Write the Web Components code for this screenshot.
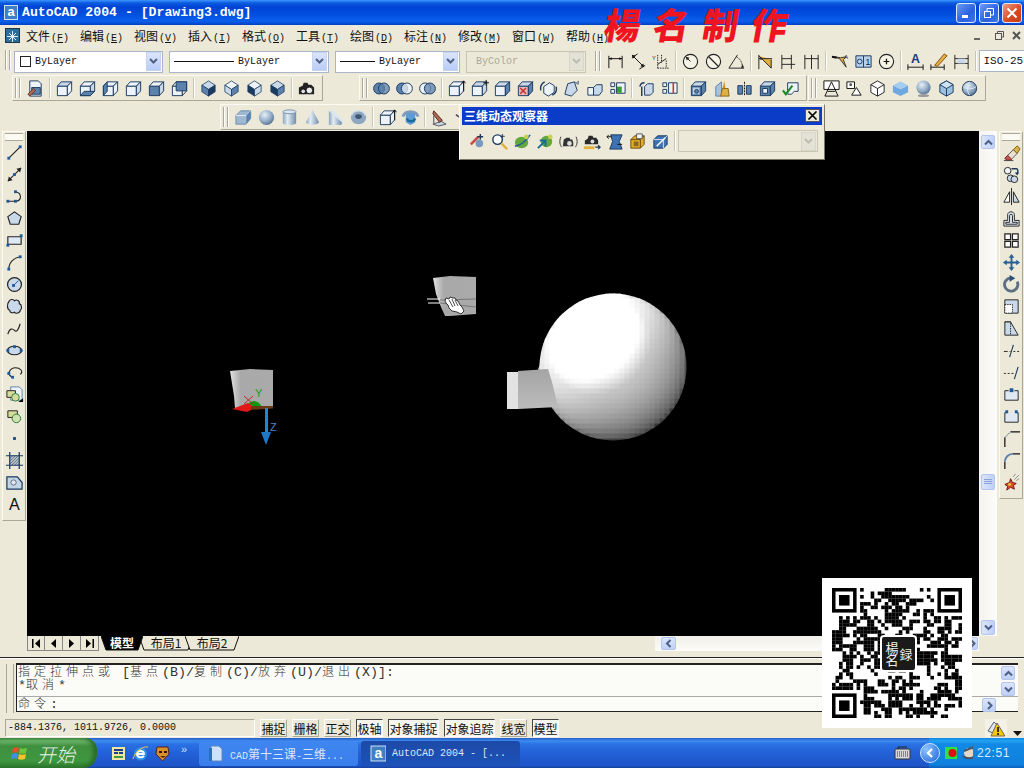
<!DOCTYPE html>
<html lang="zh">
<head>
<meta charset="utf-8">
<title>AutoCAD 2004</title>
<style>
  html, body { margin: 0; padding: 0; overflow: hidden; background: #ece9d8; }
</style>
</head>
<body>
<cad-app>
  <cad-title-bar>AutoCAD 2004 - [Drawing3.dwg]</cad-title-bar>
  <cad-menu-bar></cad-menu-bar>
  <tool-row h="27">
    <combo-bar></combo-bar>
    <tool-bar style="margin:1px 0 0 7px;border:0;padding-right:0" icons="dimlin dimali dimord | dimrad dimdia dimang | dimbase dimcont dimq | leader tol center | dima dimpen dimupd | "></tool-bar>
    <cad-combo text="ISO-25" style="margin-top:3px;width:46px"></cad-combo>
  </tool-row>
  <tool-row h="28" pad="1">
    <tool-bar style="margin-left:12px" icons="props | vtop vbot vleft vright vfront vback | iso1 iso2 iso3 iso4 | camera"></tool-bar>
    <tool-bar style="margin-left:36px" icons="union subtract intersect | extrude3 move3 box3 delface rotface taperf copyf colorf | clean sepred | shell sweep sep3 shell2 check"></tool-bar>
    <tool-bar style="margin-left:1px" icons="wire hidden3 flat3 gouraud sphere3 flat2 sphere4"></tool-bar>
  </tool-row>
  <tool-row h="29" pad="2">
    <tool-bar style="margin-left:220px" icons="sbox ssphere scyl scone swedge storus | extrude3 revolve | slice section"></tool-bar>
  </tool-row>
  <cad-workspace>
    <tool-bar slot="left" vertical icons="line xline pline polygon rect arc circle cloud spline ellipse earc insert block point hatch region mtext"></tool-bar>
    <cad-scene slot="scene"></cad-scene>
    <layout-tabs slot="tabs"></layout-tabs>
    <tool-bar slot="right" vertical icons="erase copy mirror offset array move rotate scale stretch trim extend break1 break2 chamfer fillet explode"></tool-bar>
  </cad-workspace>
  <cad-command>
    <mono-text slot="l1">指定拉伸点或 [基点(B)/复制(C)/放弃(U)/退出(X)]:</mono-text>
    <mono-text slot="l2">*取消*</mono-text>
    <mono-text slot="l3">命令:</mono-text>
  </cad-command>
  <cad-status></cad-status>
  <win-taskbar></win-taskbar>
</cad-app>
<red-stamp>楊名制作</red-stamp>
<orbit-panel></orbit-panel>
<qr-card></qr-card>

<script>
  // colours used by the toolbar icons
  const D = "#1b3a60", M = "#5b82ad", L = "#c9d9ea", P = "#eef3f8", Y = "#e0b040", G = "#3a9a3a", R = "#c8322d";

  const dot = (x, y) => `<rect x="${x - 1.5}" y="${y - 1.5}" width="3" height="3" fill="#1d5a9c"/>`;
  const box3 = (f, t, s) =>
    `<g stroke="${D}" stroke-linejoin="round"><path d="M2.5 7.5h10.500v10h-10.500z" fill="${f}"/><path d="M2.500 7.500l4-4.500h11l-4.500 4.500z" fill="${t}"/><path d="M13 7.500l4.500-4.500v9.500l-4.500 5z" fill="${s}"/></g>`;
  const iso = (t, l, r) =>
    `<g stroke="${D}" stroke-width=".8"><path d="M10 2l7 4.500-7 4.500-7-4.500z" fill="${t}"/><path d="M3 6.500l7 4.500v7l-7-4.500z" fill="${l}"/><path d="M17 6.500l-7 4.500v7l7-4.500z" fill="${r}"/></g>`;
  const rings = (a, b) =>
    `<circle cx="7.500" cy="10" r="5.800" fill="${a}" stroke="${D}"/><circle cx="12.500" cy="10" r="5.800" fill="${b}" fill-opacity=".75" stroke="${D}"/>`;
  const dimH = `<path d="M3 4v13M17 4v13M3 7h14" stroke="#111" fill="none"/><path d="M3 7l3-1.500v3zM17 7l-3-1.500v3z" fill="#111"/>`;

  const ICONS = {
    props: `<path d="M4 2h9l3 3v13H4z" fill="${P}" stroke="${D}"/><path d="M6 9h9v7H6z" fill="${M}" stroke="${D}"/><path d="M2 16l6-6 2 2-6 6z" fill="#b06a50" stroke="#633"/>`,
    vtop: box3(P, L, P), vbot: box3(P, P, L) + `<path d="M2.500 17.500l4-4.500h11l-4.500 4.500z" fill="${M}" stroke="${D}"/>`,
    vleft: box3(P, P, P) + `<path d="M2.500 7.500l4-4.500v10l-4 4.500z" fill="${M}" stroke="${D}"/>`,
    vright: box3(P, P, L), vfront: box3(M, P, L), vback: box3(P, P, P) + `<path d="M6.500 3h11v9.500h-11z" fill="${M}" stroke="${D}"/>`,
    iso1: iso(L, M, D), iso2: iso(P, L, M), iso3: iso(P, D, L), iso4: iso(L, D, M),
    camera: `<path d="M2 9l4-2 1-3h4l1 2h3l3 3v7H2z" fill="#222"/><circle cx="13" cy="12" r="3.500" fill="#eee" stroke="#111"/><circle cx="6.500" cy="13" r="2.500" fill="#ddd" stroke="#111"/>`,
    union: rings(M, M), subtract: rings(M, P), intersect: rings(P, M),
    extrude3: box3(P, P, P) + `<path d="M17.500 13V2M15.500 4.500l2-2.500 2 2.500" fill="none" stroke="#111"/>`,
    move3: box3(P, L, L) + `<path d="M14 4h6M17 1v6" stroke="#111"/>`,
    box3: box3(P, L, M),
    delface: box3("#e8b8b8", L, M) + `<path d="M4.500 9.500l6 6M10.500 9.500l-6 6" stroke="${R}" stroke-width="1.600"/>`,
    rotface: `<path d="M5 8l6-4 5 3v7l-6 4-5-3z" fill="${P}" stroke="${D}"/><path d="M2 12a8 8 0 0 1 4-9M18 8a8 8 0 0 1-4 9" fill="none" stroke="${D}" stroke-width="1.500"/>`,
    taperf: `<path d="M3 16l3-11 7-2 3 9-6 6z" fill="${L}" stroke="${D}"/><path d="M14 3l3 3M17 2v3" stroke="${D}"/>`,
    copyf: `<path d="M3 9h6v8H3z" fill="${P}" stroke="${D}"/><path d="M9 9l3-3h6v7l-3 4H9z" fill="${L}" stroke="${D}"/>`,
    colorf: `<path d="M3 4h4v4H3zM3 11h4v4H3z" fill="${P}" stroke="${D}"/><path d="M9 4h9v11H9z" fill="${P}" stroke="${D}"/><path d="M9.500 8h5v6.500h-5z" fill="${G}"/>`,
    clean: `<path d="M3 8a5 5 0 0 1 5-4M5 18V8" fill="none" stroke="${D}" stroke-width="1.500"/><path d="M8 8l3-3h6v9l-3 3H8z" fill="${L}" stroke="${D}"/>`,
    sepred: `<path d="M3 4h4v4H3zM3 11h4v4H3z" fill="${P}" stroke="${D}"/><path d="M9 4h9v11H9z" fill="${P}" stroke="${D}"/><path d="M14 4v11" stroke="${R}" stroke-width="1.600"/>`,
    shell: box3(M, L, M) + `<path d="M4 9h7v7H4z" fill="#b9cde2"/><circle cx="8" cy="13" r="2" fill="${M}" stroke="${D}"/>`,
    sweep: `<path d="M4 18V8l6-5v15z" fill="#a9c2dc" stroke="${M}"/><path d="M13 2l1 8h-3z" fill="#c9902a"/><path d="M9 18l2-8h6l1 8z" fill="${Y}" stroke="#8a6414"/>`,
    sep3: `<path d="M3 7h5v9H3zM12 7h5v9h-5z" fill="${M}" stroke="${D}"/><path d="M10 3v14" stroke="#111" stroke-dasharray="2 1"/>`,
    shell2: box3(M, L, M) + `<path d="M5 10h5v5H5z" fill="${P}" stroke="${D}"/>`,
    check: `<path d="M7 4h11v9h-4l-3 3H7z" fill="${P}" stroke="${D}"/><path d="M2 12l3 4 7-9" fill="none" stroke="#1c8a2c" stroke-width="2.200"/>`,
    wire: `<path d="M2 2h16v9H2z" fill="#fff" stroke="#111"/><path d="M10 3L3 18h14z" fill="none" stroke="#111"/><path d="M6 13h8" stroke="#111"/>`,
    hidden3: `<path d="M2 3h8v7H2z" fill="#fff" stroke="#111"/><path d="M12 9l5 8H7z" fill="#fff" stroke="#111"/><circle cx="6" cy="6" r="1.500" fill="#555"/>`,
    flat3: `<path d="M10 2l7 4v8l-7 4-7-4V6z" fill="#fff" stroke="#222"/><path d="M3 6l7 4 7-4M10 10v8" stroke="#222" fill="none"/>`,
    gouraud: `<path d="M10 3l8 4v7l-8 4-8-4V7z" fill="#6fa8de"/><path d="M2 7l8 4 8-4-8-4z" fill="#a5cdf0"/>`,
    sphere3: `<circle cx="10" cy="9" r="7.500" fill="url(#s)"/><ellipse cx="10" cy="17.500" rx="6" ry="1.500" fill="#999"/>`,
    flat2: `<path d="M10 2l7 4v8l-7 4-7-4V6z" fill="#9cc0e0" stroke="${D}"/><path d="M3 6l7 4 7-4-7-4z" fill="#cfe2f3" stroke="${D}"/><path d="M10 10v8" stroke="${D}"/>`,
    sphere4: `<circle cx="10" cy="10" r="7.500" fill="url(#s)" stroke="${D}"/><path d="M3 8c4 3 10 3 14 0M10 3c-3 4-3 9 0 14" stroke="#dfe9f2" fill="none"/>`,
    sbox: `<path d="M2 8l5-5h10.500v8l-5 6H2z" fill="#9fb8d2" stroke="#6d8cab"/><path d="M2 8h11l4.500-5" fill="none" stroke="#e9f0f7"/><path d="M13 8v9l4.500-6V3z" fill="${M}"/>`,
    ssphere: `<circle cx="10" cy="10" r="8" fill="url(#s)"/>`,
    scyl: `<path d="M3 4v12c1 2.500 13 2.500 14 0V4z" fill="url(#c)"/><ellipse cx="10" cy="4" rx="7" ry="2" fill="#dbe6f0" stroke="#7a95b0"/>`,
    scone: `<path d="M10 2L3 15c1 3.500 13 3.500 14 0z" fill="url(#c)"/>`,
    swedge: `<path d="M3 3l14 12-1 3H3z" fill="url(#c)"/><path d="M3 3l4-1 12 12-2 1z" fill="#dbe6f0"/>`,
    storus: `<ellipse cx="10" cy="10" rx="8" ry="7" fill="#8ea6bf"/><ellipse cx="10" cy="9" rx="3.500" ry="2.500" fill="#3e5673"/><path d="M3 8a7 5 0 0 1 14 0" fill="none" stroke="#d5e0eb" stroke-width="1.500"/>`,
    revolve: `<path d="M5 6l5-3 5 3v9l-5 3-5-3z" fill="#5b9bd8"/><path d="M2 9c2-7 14-7 16 0" fill="none" stroke="#7e9ab8" stroke-width="3"/><path d="M6 11c2 4 7 4 9 0" fill="none" stroke="#1a6c9a" stroke-width="2.500"/>`,
    slice: `<path d="M3 17l9-3 5 3-8 2z" fill="#c9d2db" stroke="#556"/><path d="M4 3l9 10-3 2L3 6z" fill="#b06a50" stroke="#522"/><path d="M4 8v8" stroke="#445"/>`,
    section: `<path d="M3 7l7 5 7-5" fill="none" stroke="#445" stroke-width="1.500"/>`,
    line: `<path d="M4 16L16 4" stroke="#222" stroke-width="1.200"/>` + dot(4, 16) + dot(16, 4),
    xline: `<path d="M3 17L17 3" stroke="#222" stroke-width="1.200"/><path d="M17 3l-1 5-4-4zM3 17l1-5 4 4z" fill="#222"/>` + dot(10, 10),
    pline: `<path d="M3 15h8c7 0 7-9 0-10" fill="none" stroke="#222" stroke-width="1.200"/>` + dot(3, 15) + dot(11, 15) + dot(11, 5),
    polygon: `<path d="M10 3l7 5-2.500 8h-9L3 8z" fill="${L}" stroke="#222" stroke-width="1.200"/>`,
    rect: `<path d="M3 6h14v8H3z" fill="#dfe9f3" stroke="#222" stroke-width="1.200"/>` + dot(3, 15) + dot(17, 5),
    arc: `<path d="M4 17C4 10 9 5 16 4" fill="none" stroke="#222" stroke-width="1.200"/>` + dot(4, 17) + dot(16, 4),
    circle: `<circle cx="10" cy="10" r="7.300" fill="${L}" stroke="#222" stroke-width="1.300"/><path d="M10 10l4-4" stroke="#1d5a9c"/>` + dot(9, 11),
    cloud: `<path d="M4 5c1-3 5-3 6-1 2-2 6 0 5 3 3 1 3 6 1 7 0 3-5 4-6 2-2 1-5 1-5-2C2 13 2 7 4 5z" fill="${L}" stroke="#222" stroke-width="1.200"/>`,
    spline: `<path d="M3 16c2-7 5-6 7-4s4 0 6-7" fill="none" stroke="#222" stroke-width="1.200"/>`,
    ellipse: `<ellipse cx="10" cy="10" rx="7.500" ry="4.500" fill="${L}" stroke="#222" stroke-width="1.200"/>` + dot(3, 10) + dot(17, 10) + dot(10, 6),
    earc: `<path d="M8 15C0 12 6 5 11 5s9 4 5 7" fill="none" stroke="#222" stroke-width="1.200"/>` + dot(4, 11) + dot(8, 15),
    insert: `<path d="M6 2h9l3 3v11H6z" fill="${P}" stroke="${M}"/><path d="M2 6h9v7H2z" fill="#d6dd9c" stroke="#222"/><circle cx="11" cy="13" r="4" fill="#d6dd9c" stroke="#2a7a3a"/><path d="M14 18l5-4v4z" fill="#000"/>`,
    block: `<path d="M3 4h10v7H3z" fill="#d6dd9c" stroke="#222"/><circle cx="12" cy="12" r="4.500" fill="#cfe3b0" stroke="#2a7a3a"/>`,
    point: `<rect x="8.500" y="8.500" width="3" height="3" fill="#1d4a7c"/>`,
    hatch: `<path d="M5 5h10v10H5z" fill="#b9c6d4"/><path d="M5 8l3-3M5 11l6-6M5 14l9-9M7 15l8-8M10 15l5-5M13 15l2-2" stroke="#445" stroke-width=".7"/><path d="M1 5h18M1 15h18M5 1v18M15 1v18" stroke="#1b3a60" stroke-width="1.300"/>`,
    region: `<path d="M2 4h11l5 6v7H2z" fill="#c3d6e8" stroke="#1b3a60" stroke-width="1.300"/><circle cx="9" cy="10" r="2.800" fill="#dfe9f3" stroke="#667"/>`,
    mtext: `<text x="10" y="16" text-anchor="middle" font-family="Liberation Sans,sans-serif" font-size="17" fill="#111">A</text>`,
    erase: `<path d="M3 16l9-9 4 4-7 7H5z" fill="#e9e2d2" stroke="#555"/><path d="M12 7l4-4 3 3-3 5z" fill="#d8b54a" stroke="#7a5a10"/><path d="M3 16l3-3 4 4-1 1H5z" fill="#c55" stroke="#722"/><path d="M2 18.500h10" stroke="#444"/>`,
    copy: `<circle cx="6" cy="6" r="3.500" fill="${P}" stroke="#222"/><circle cx="9" cy="14" r="3.500" fill="${L}" stroke="#222"/><circle cx="13" cy="15" r="3.500" fill="${L}" stroke="#222"/><path d="M10 4h5c2 0 2 3 1 5" fill="none" stroke="#1b3a60" stroke-width="1.500"/><path d="M13.500 8l2.500 3 2-3z" fill="#1b3a60"/>`,
    mirror: `<path d="M10 1v18" stroke="#222"/><path d="M8 5v11H2z" fill="#fff" stroke="#222"/><path d="M12 5v11h6z" fill="${L}" stroke="#222"/>`,
    offset: `<path d="M2 18v-6h4V6c0-4 7-4 7 0v6h5v6z" fill="#e4ecf4" stroke="#222"/><path d="M4 16v-2h4V7c0-2 3-2 3 0v7h5v2z" fill="none" stroke="#222"/>`,
    array: `<path d="M3 3h6v6H3zM11 3h6v6h-6zM3 11h6v6H3zM11 11h6v6h-6z" fill="#fff" stroke="#222" stroke-width="1.300"/>`,
    move: `<path d="M10 1l3 4h-2v4h4V7l4 3-4 3v-2h-4v4h2l-3 4-3-4h2v-4H5v2l-4-3 4-3v2h4V5H7z" fill="#2a5f96"/>`,
    rotate: `<path d="M9 3a7 7 0 1 0 7 4" fill="none" stroke="#5c6f85" stroke-width="3"/><path d="M8 0v7l6-3.500z" fill="#2a4f7a"/>`,
    scale: `<path d="M3 3h14v14H3z" fill="${L}" stroke="#222"/><path d="M3 8h8v9H3z" fill="#fff" stroke="#222" stroke-dasharray="1.500 1"/>`,
    stretch: `<path d="M3 3h6l8 14H3z" fill="${L}" stroke="#222"/><path d="M3 3h6v14" fill="none" stroke="#222" stroke-dasharray="1.500 1"/>`,
    trim: `<path d="M2 11h4M8 11h1M12 11h2M16 11h2" stroke="#222"/><path d="M8 17l4-13" stroke="#1b3a60" stroke-width="1.200"/>`,
    extend: `<path d="M2 11h2M6 11h2M10 11h2" stroke="#222"/><path d="M13 17l4-13" stroke="#1b3a60" stroke-width="1.200"/>`,
    break1: `<path d="M3 6h14v10H3z" fill="#dfe9f3"/><path d="M3 16V6h4M13 6h4v10H3" fill="none" stroke="#222"/><rect x="8" y="3.500" width="4" height="4" fill="#1d5a9c"/>`,
    break2: `<path d="M3 6h14v10H3z" fill="#dfe9f3"/><path d="M3 16V6h2M15 6h2v10H3" fill="none" stroke="#222"/><path d="M3.500 3.500h3v3h-3zM13.500 3.500h3v3h-3z" fill="#1d5a9c"/>`,
    chamfer: `<path d="M3 19V9M9 3h10" stroke="#111" stroke-width="1.300"/><path d="M3 9l6-6" stroke="#1b3a60" stroke-dasharray="1.500 1"/>`,
    fillet: `<path d="M3 19v-8M11 3h8" stroke="#111" stroke-width="1.300"/><path d="M3 11c0-4 4-8 8-8" fill="none" stroke="#5b82ad" stroke-width="2"/>`,
    explode: `<path d="M3 12l5-2 1-4 2 4 4 1-3 2 1 4-4-2-4 3 1-4z" fill="#d8502a" stroke="#711"/><path d="M13 7l5-5M15 8l3-2M12 4l2-3" stroke="#8a8a8a"/><circle cx="8" cy="12" r="1.500" fill="#f2c23a"/>`,
    dimlin: dimH,
    dimali: `<path d="M3 6l6-4M11 18l6-4M4 4l11 11" stroke="#111" fill="none"/><path d="M3 3l4 1-3 3zM16 16l-4-1 3-3z" fill="#111"/>`,
    dimord: `<path d="M6 17h12M6 3v14M10 3v8M15 9v8" stroke="#222" stroke-dasharray="1.500 1" fill="none"/><text x="0" y="8" font-size="6" font-family="Liberation Sans" fill="#222">Y</text><path d="M6 13l9-6" stroke="#222"/>`,
    dimrad: `<circle cx="10" cy="10" r="7.500" fill="#f5f2e6" stroke="#222" stroke-width="1.200"/><path d="M10 10L5 5" stroke="#222"/><path d="M5 5l1 4 3-3z" fill="#222"/>`,
    dimdia: `<circle cx="10" cy="10" r="7.500" fill="#f5f2e6" stroke="#222" stroke-width="1.200"/><path d="M5 5l10 10" stroke="#222" stroke-width="1.300"/>`,
    dimang: `<path d="M2 17h16M2 17L11 3" stroke="#222" fill="none"/><path d="M10 5a12 12 0 0 1 6 12" fill="none" stroke="#222" stroke-dasharray="2 1"/><path d="M15 17l1-4 2 3z" fill="#222"/>`,
    dimbase: `<path d="M3 3v15M3 4l13 13V8" fill="${Y}" stroke="#222"/><path d="M3 7h14" stroke="#222"/><path d="M3 7l3-1.500v3z" fill="#222"/>`,
    dimcont: `<path d="M3 3v15M13 3v15M3 7h10M3 13h14" stroke="#222" fill="none"/>`,
    dimq: `<path d="M3 3v15M10 3v15M17 3v15M3 7h14" stroke="#222" fill="none"/>`,
    leader: `<path d="M3 5l6 2 7 9-3-8 3-3-6 1z" fill="${Y}" stroke="#333"/><path d="M1 5l5 1" stroke="#111" stroke-width="2"/><text x="14" y="7" font-size="6" font-family="Liberation Sans" fill="#225">A</text>`,
    tol: `<path d="M2 4h16v12H2z" fill="#b8d0ea" stroke="#1b3a60"/><path d="M10 4v12" stroke="#1b3a60"/><circle cx="6" cy="10" r="2.500" fill="none" stroke="#1b3a60"/><text x="12" y="14" font-size="9" font-family="Liberation Sans" fill="#123">1</text>`,
    center: `<circle cx="10" cy="10" r="7.500" fill="#f5f2e6" stroke="#222" stroke-width="1.200"/><path d="M7 10h6M10 7v6" stroke="#111" stroke-width="1.300"/>`,
    dima: `<path d="M2 13v6M18 13v6M2 16h16" stroke="#111"/><text x="10" y="12" text-anchor="middle" font-size="13" font-weight="bold" font-family="Liberation Sans" fill="#1b3a80">A</text>`,
    dimpen: `<path d="M2 13v6M16 13v6M2 16h14" stroke="#111"/><path d="M6 14L16 2l3 2L9 15z" fill="${Y}" stroke="#8a4a14"/>`,
    dimupd: `<path d="M3 3v15M17 3v15M3 7h14M3 12h14" stroke="#222" fill="none"/><path d="M6 7h8v5H6z" fill="${L}"/>`,
    orb1: `<path d="M3 12l8-8 2 2-8 8z" fill="#c8504a"/><circle cx="13" cy="12" r="4" fill="#7a9ac0"/><path d="M14 2v6M11 5h6" stroke="${D}" stroke-width="1.500"/>`,
    orb2: `<circle cx="8" cy="8" r="5" fill="#fff" stroke="${D}" stroke-width="1.500"/><path d="M12 12l6 6" stroke="${Y}" stroke-width="2.500"/><path d="M13 2v5M10.500 4.500h5" stroke="${D}"/>`,
    orb3: `<ellipse cx="9" cy="11" rx="7" ry="6" fill="#62a83c"/><path d="M2 15C8 14 14 9 18 3" stroke="#2a5f96" stroke-width="1.800" fill="none"/><circle cx="14" cy="5" r="2.500" fill="#c9d24a"/>`,
    orb4: `<ellipse cx="11" cy="10" rx="6" ry="6" fill="#62a83c"/><path d="M2 17l8-8M4 9h6v6" stroke="#1b6a9a" stroke-width="2" fill="none"/><circle cx="15" cy="5" r="2.500" fill="#c9d24a"/>`,
    orb5: `<path d="M5 8l3-2h3l1 2h2l1 3v4H4z" fill="#333"/><circle cx="11" cy="12" r="2.500" fill="#ddd"/><path d="M2 5c-2 5-1 9 1 11M18 5c2 5 1 9-1 11" fill="none" stroke="#333"/>`,
    orb6: `<path d="M3 9l3-2 1-3h4l1 2h3l2 3v4H3z" fill="#2a2a2a"/><circle cx="11" cy="10" r="2" fill="#ddd"/><path d="M2 15h11v3H2z" fill="${Y}"/><path d="M14 16h5m-2-2l2 2-2 2" stroke="${D}" fill="none" stroke-width="1.300"/>`,
    orb7: `<path d="M6 3h12l-3 7 3 8H5l3-8z" fill="#3d72b4" stroke="${D}"/><path d="M2 5h5M2 5l2-2M2 5l2 2M13 13h5" stroke="#111"/>`,
    orb8: `<path d="M3 8l4-4h10v9l-4 4H3z" fill="#e2ad2c" stroke="#6a4a08"/><path d="M3 8h10v9M13 8l4-4" fill="none" stroke="#6a4a08"/><path d="M6 10h5v5H6z" fill="#8a6a20"/><path d="M9 2h6v5H9z" fill="${P}" stroke="#555"/>`,
    orb9: `<path d="M3 8l4-4h10v9l-4 4H3z" fill="#3d72b4" stroke="${D}"/><path d="M3 8h10v9M13 8l4-4" fill="none" stroke="#dfe9f3"/><path d="M6 15L15 6" stroke="#fff" stroke-width="1.500"/>`
  };

  const iconDefs = `<defs>
    <radialGradient id="s" cx=".38" cy=".32" r=".75"><stop offset="0" stop-color="#e8f0f8"/><stop offset=".6" stop-color="#8fa9c4"/><stop offset="1" stop-color="#4d6a8a"/></radialGradient>
    <linearGradient id="c"><stop offset="0" stop-color="#8ba4bf"/><stop offset=".35" stop-color="#e3ecf4"/><stop offset="1" stop-color="#6e8cab"/></linearGradient>
  </defs>`;

  const iconSvg = (name, size = 20) =>
    `<svg xmlns="http://www.w3.org/2000/svg" width="${size}" height="${size}" viewBox="0 0 20 20">${iconDefs}${ICONS[name] || ""}</svg>`;

  class CadApp extends HTMLElement {
    connectedCallback() {
      this.attachShadow({ mode: "open" }).innerHTML = `
        <style>
          :host { display: flex; flex-direction: column; width: 1024px; height: 768px; overflow: hidden;
                  background: #ece9d8; font-family: "Noto Sans CJK SC", "Liberation Sans", sans-serif; }
        </style><slot></slot>`;
    }
  }

  class CadTitleBar extends HTMLElement {
    connectedCallback() {
      this.attachShadow({ mode: "open" }).innerHTML = `
        <style>
          :host { display: flex; align-items: center; height: 25px; flex: none; padding: 0 2px 0 4px; box-sizing: border-box;
                  background: linear-gradient(#3d95ff 0, #0a5be0 3px, #0043d4 7px, #0250e0 15px, #0b5fec 21px, #0040c4 25px); }
          .logo { width: 14px; height: 15px; background: #3f7fc4; border: 1px solid #cfe0f2; color: #fff; box-sizing: border-box;
                  font: bold 13px/12px "Liberation Sans", sans-serif; text-align: center; }
          .t { margin-left: 4px; color: #fff; font: bold 13.200px "Liberation Mono", monospace; flex: 1; white-space: pre; }
          .b { width: 20px; height: 20px; margin-left: 3px; box-sizing: border-box; border: 1px solid #dfe9fb; border-radius: 3px;
               background: linear-gradient(135deg, #6d9cf2, #2a5fe0 60%, #3f78ee); display: flex; align-items: center; justify-content: center; }
          .x { background: linear-gradient(135deg, #ee9a80, #d8481f 60%, #c93c14); margin-right: 0; }
        </style>
        <div class="logo">a</div><div class="t"><slot></slot></div>
        <div class="b"><svg width="12" height="12"><rect x="2" y="8" width="6" height="3" fill="#fff"/></svg></div>
        <div class="b"><svg width="12" height="12" fill="none" stroke="#fff"><rect x="1.500" y="4.500" width="6" height="6"/><path d="M4 4V1.500h6.500V8H8" /></svg></div>
        <div class="b x"><svg width="12" height="12" stroke="#fff" stroke-width="2"><path d="M1.500 1.500l9 9M10.500 1.500l-9 9"/></svg></div>`;
    }
  }

  class CadMenuBar extends HTMLElement {
    connectedCallback() {
      const items = [["文件", "F"], ["编辑", "E"], ["视图", "V"], ["插入", "I"], ["格式", "O"], ["工具", "T"], ["绘图", "D"], ["标注", "N"], ["修改", "M"], ["窗口", "W"], ["帮助", "H"]];
      this.attachShadow({ mode: "open" }).innerHTML = `
        <style>
          :host { display: flex; align-items: center; height: 22px; flex: none; padding: 0 0 2px 5px; box-sizing: border-box; font-size: 12px; color: #111; overflow: hidden; }
          .logo { width: 15px; height: 15px; margin-right: 6px; background: #2a6f9c; border: 1px solid #234; box-sizing: border-box; }
          .m { width: 54px; white-space: nowrap; letter-spacing: 0; }
          .m small { font: 10px "Liberation Mono", monospace; margin-left: 1px; }
          .m u { text-decoration: underline; }
          .sp { flex: 1; }
          .c { width: 22px; flex: none; display: flex; justify-content: center; }
        </style>
        <div class="logo"><svg width="13" height="13"><path d="M6.500 1v11M1 6.500h11M3 3l7 7M10 3l-7 7" stroke="#dff2ff" stroke-width="1"/></svg></div>
        ${items.map(([t, k]) => `<div class="m">${t}<small>(<u>${k}</u>)</small></div>`).join("")}
        <div class="sp"></div>
        <div class="c"><svg width="11" height="11"><rect x="2" y="8" width="6" height="2" fill="#666"/></svg></div>
        <div class="c"><svg width="11" height="11" fill="none" stroke="#555"><rect x="1.500" y="3.500" width="6" height="6"/><path d="M3.500 3V1.500h6V7H8"/></svg></div>
        <div class="c" style="justify-content:flex-start;width:12px;padding-left:2px"><svg width="9" height="11" stroke="#555" stroke-width="2"><path d="M1 2l7 7M8 2L1 9"/></svg></div>`;
    }
  }

  class ToolRow extends HTMLElement {
    connectedCallback() {
      this.attachShadow({ mode: "open" }).innerHTML = `
        <style>
          :host { display: flex; align-items: flex-start; box-sizing: border-box; height: ${this.getAttribute("h") || 27}px;
                  padding-top: ${this.getAttribute("pad") || 0}px; flex: none; overflow: hidden; }
        </style><slot></slot>`;
    }
  }

  class ToolBar extends HTMLElement {
    connectedCallback() {
      const v = this.hasAttribute("vertical");
      const cells = this.getAttribute("icons").trim().split(/\s+/).map(n =>
        n === "|" ? `<i class="s"></i>` : `<span class="b">${iconSvg(n, 19)}</span>`).join("");
      this.attachShadow({ mode: "open" }).innerHTML = `
        <style>
          :host { display: inline-flex; flex: none; box-sizing: border-box; border: 1px solid; border-color: #fbfaf3 #aca899 #aca899 #fbfaf3;
                  ${v ? "flex-direction: column; width: 24px; padding-bottom: 5px;" : "height: 26px; align-items: center; padding-right: 4px;"} }
          .g { flex: none; box-sizing: border-box; ${v
            ? "height: 8px; margin: 1px 2px 0; border-top: 1px solid #aca899; border-bottom: 1px solid #aca899; background: #fbfaf3;"
            : "width: 10.500px; height: 20px; margin-right: 0; background: linear-gradient(90deg,transparent 2px,#aca899 2px,#aca899 3px,#fff 3px,#fff 4px,transparent 4px,transparent 6px,#aca899 6px,#aca899 7px,#fff 7px,#fff 8px,transparent 8px);"} }
          .b { flex: none; display: flex; align-items: center; justify-content: center; ${v ? "height: 22px;" : "width: 23px;"} }
          .s { flex: none; width: 6px; height: 20px; background: linear-gradient(90deg,transparent 2px,#c8c5b2 2px,#c8c5b2 3px,#fff 3px,#fff 4px,transparent 4px); }
        </style>
        <div class="g"></div>${cells}`;
    }
  }

  class CadCombo extends HTMLElement {
    connectedCallback() {
      const off = this.hasAttribute("disabled");
      const line = this.getAttribute("line");
      this.attachShadow({ mode: "open" }).innerHTML = `
        <style>
          :host { display: flex; align-items: center; flex: none; box-sizing: border-box; height: 22px; background: ${off ? "#ece9d8" : "#fff"};
                  border: 1px solid ${off ? "#c9c6b4" : "#a9b6c9"}; font: 10px "Liberation Mono", monospace; color: ${off ? "#aca899" : "#111"};
                  padding-left: 4px; overflow: hidden; white-space: pre; }
          .sw { width: 9px; height: 9px; border: 1px solid #222; margin: 0 4px 0 1px; flex: none; }
          .ln { height: 1px; background: #111; flex: none; margin-right: 4px; }
          .t { flex: 1; }
          .a { width: 15px; height: 19px; flex: none; margin-right: 1px; display: flex; align-items: center; justify-content: center;
               background: ${off ? "#e4e2d6" : "linear-gradient(#dbe5fb,#b9ccf6)"}; border: 1px solid ${off ? "#d8d6c8" : "#c5d3f3"}; box-sizing: border-box; }
        </style>
        ${this.hasAttribute("swatch") ? `<i class="sw"></i>` : ""}
        ${line ? `<i class="ln" style="width:${line}px"></i>` : ""}
        <span class="t" style="${this.getAttribute("text") === "ISO-25" ? "font-size:11px" : ""}">${this.getAttribute("text")}</span>
        ${this.hasAttribute("noarrow") || this.getAttribute("text") === "ISO-25" ? "" : `<span class="a"><svg width="9" height="7" fill="none" stroke="${off ? "#bdbcae" : "#4d6185"}" stroke-width="2"><path d="M1 1l3.500 3.500L8 1"/></svg></span>`}`;
    }
  }

  class ComboBar extends HTMLElement {
    connectedCallback() {
      this.attachShadow({ mode: "open" }).innerHTML = `
        <style>
          :host { display: flex; align-items: center; height: 27px; margin-left: 3px; gap: 6px; flex: none; padding-top: 2px; box-sizing: border-box;
                  background: linear-gradient(90deg,transparent 2px,#aca899 2px,#aca899 3px,#fff 3px,#fff 4px,transparent 4px,transparent 6px,#aca899 6px,#aca899 7px,#fff 7px,#fff 8px,transparent 8px) 0 3px/100% 20px no-repeat; padding-left: 11px; }
        </style>
        <cad-combo swatch text="ByLayer" style="width:149px"></cad-combo>
        <cad-combo line="60" text="ByLayer" style="width:160px"></cad-combo>
        <cad-combo line="35" text="ByLayer" style="width:125px"></cad-combo>
        <cad-combo disabled text="ByColor" style="width:120px;padding-left:9px"></cad-combo>`;
    }
  }

  class CadWorkspace extends HTMLElement {
    connectedCallback() {
      this.attachShadow({ mode: "open" }).innerHTML = `
        <style>
          :host { display: grid; grid-template-columns: 27px 952px 18px 27px; grid-template-rows: 505px 15px; height: 526px; flex: none; }
          .l { grid-row: 1 / 3; padding: 0 0 0 2px; display: flex; align-items: flex-start; }
          .s { grid-column: 2; } .t { grid-column: 2; grid-row: 2; }
          .r { grid-column: 4; grid-row: 1 / 3; padding-left: 2px; display: flex; align-items: flex-start; }
          .v { grid-column: 3; grid-row: 1 / 2; background: linear-gradient(90deg,#f4f3ee,#fcfcfa); position: relative; }
          .v b { position: absolute; left: 2px; width: 14px; box-sizing: border-box; border: 1px solid #b4c4ea; border-radius: 2px;
                 background: linear-gradient(90deg,#dbe5fb,#bfd0f7); display: flex; align-items: center; justify-content: center; }
        </style>
        <div class="l"><slot name="left"></slot></div>
        <div class="s"><slot name="scene"></slot></div>
        <div class="v">
          <b style="top:4px;height:14px"><svg width="9" height="7" fill="none" stroke="#4d6185" stroke-width="2"><path d="M1 5.500L4.500 2 8 5.500"/></svg></b>
          <b style="top:343px;height:16px"><svg width="8" height="8" stroke="#8ba2d8"><path d="M0 1.500h8M0 3.500h8M0 5.500h8"/></svg></b>
          <b style="top:489px;height:15px"><svg width="9" height="7" fill="none" stroke="#4d6185" stroke-width="2"><path d="M1 1.500L4.500 5 8 1.500"/></svg></b>
        </div>
        <div class="t"><slot name="tabs"></slot></div>
        <div class="r"><slot name="right"></slot></div>`;
    }
  }

  class CadScene extends HTMLElement {
    connectedCallback() {
      // faceted sphere: small flat shaded cells like the 3D orbit preview
      const cx = 613, cy = 367, r = 73.5;
      const lx = -0.27, ly = -0.41, lz = 0.87;
      let cells = "";
      for (let y = cy - r - 5; y < cy + r + 5; y += 5) {
        for (let x = cx - r - 5; x < cx + r + 5; x += 5) {
          const nx = (x + 2.5 - cx) / r, ny = (y + 2.5 - cy) / r, q = 1 - nx * nx - ny * ny;
          if (q < -0.12) continue;
          const nz = Math.sqrt(Math.max(q, 0));
          const h = (nx * lx + ny * ly + nz * lz + 1) / 2;
          let s = h < 0.85 ? 0.16 + (h - 0.2) * 0.95 : 0.78 + (h - 0.85) * 3;
          s += 0.3 * Math.pow(Math.max(0, -ny), 2) + 0.25 * Math.pow(Math.max(0, -nx), 2);
          const v = Math.max(0, Math.min(255, Math.round(255 * s)));
          cells += `<rect x="${x}" y="${y}" width="5.500" height="5.500" fill="rgb(${v},${v},${v})"/>`;
        }
      }
      this.attachShadow({ mode: "open" }).innerHTML = `
        <style>
          :host { display: block; width: 952px; height: 505px; background: #000; overflow: hidden; }
          svg { display: block; }
          text { font-family: "Liberation Sans", sans-serif; }
        </style>
        <svg width="952" height="505" viewBox="27 131 952 505">
          <defs>
            <clipPath id="ball"><circle cx="${cx}" cy="${cy}" r="${r}"/></clipPath>
            <linearGradient id="cheek" x1="0" x2="1" y1="0" y2="0"><stop offset="0" stop-color="#e2e2e2"/><stop offset=".25" stop-color="#a9a9a9"/><stop offset="1" stop-color="#aaa"/></linearGradient>
            <linearGradient id="nose" x1="0" x2="0" y1="0" y2="1"><stop offset="0" stop-color="#a4a4a4"/><stop offset="1" stop-color="#bcbcbc"/></linearGradient>
          </defs>
          <path d="M538 369l8-18 20 40-8 16z" fill="#bdbdbd"/>
          <g clip-path="url(#ball)">${cells}</g>
          <path d="M518 371l30-2 4 13 6 25-40 2z" fill="url(#nose)"/>
          <path d="M507 372h11v37h-11z" fill="#e2e2e2"/>

          <path d="M433 278l17-2 26 1v37l-26 2h-5l-4-9-5-13z" fill="url(#cheek)"/>
          <path d="M230 371l20-2 23 1v37l-38 1-1-12z" fill="url(#cheek)"/>

          <g stroke="#777" fill="none"><path d="M440 300l36-1M440 303l36 4"/></g>
          <path d="M427 299h13M428 303h12" stroke="#fff"/>
          <path d="M445 301l1-3 3 1 1-2 3 1 2 0 1 2 2 1 2 4 2 2 2 4-3 3-4-2-5-1-3-3-1-3-2-2z" fill="#fff" stroke="#222" stroke-width=".9"/>
          <path d="M449 300l4 7M452 299l3 7M455 300l3 6" stroke="#222" stroke-width=".8"/>

          <path d="M246 407c2-4 5-6 8-6s6 2 8 6z" fill="#0c9a12"/>
          <path d="M248 406l25 0v2.500l-25 1.500z" fill="#6a3a14"/>
          <path d="M232 409l16-6 3 2v5l-4 2z" fill="#e01818"/>
          <path d="M244 404l9-8M244 396l9 8" stroke="#c02a2a" fill="none"/>
          <text x="255" y="397" font-size="11" fill="#12a018">Y</text>
          <rect x="265" y="408" width="3" height="26" fill="#1e88d8"/>
          <path d="M261 432h10l-5 13z" fill="#1e78c8"/>
          <text x="270" y="431" font-size="11" fill="#4a82c8">Z</text>
        </svg>`;
    }
  }

  class LayoutTabs extends HTMLElement {
    connectedCallback() {
      const shape = (w, fill) => `<svg class="sh" width="${w + 8}" height="15"><path d="M0 0L5 14H${w + 3}L${w + 8} 0" fill="${fill}" stroke="#111"/></svg>`;
      this.attachShadow({ mode: "open" }).innerHTML = `
        <style>
          :host { display: flex; height: 15px; align-items: stretch; font-size: 12px; color: #111; line-height: 14px; position: relative; }
          .n { width: 18px; border: 1px solid #888; border-width: 0 1px 1px 0; box-sizing: border-box; display: flex; align-items: center; justify-content: center; flex: none; }
          .tab { width: 46px; text-align: center; position: relative; box-sizing: border-box; flex: none; }
          .tab span { position: relative; }
          .tab.on { color: #fff; font-weight: bold; width: 34px; margin-left: 5px; }
          .sh { position: absolute; left: -4px; top: 0; }
          .sp { flex: 1; }
          .hs { width: 324px; background: linear-gradient(#f1f0ea,#fbfbf8); position: relative; flex: none; }
          .hs b { position: absolute; top: 1px; height: 13px; width: 15px; box-sizing: border-box; border: 1px solid #b4c4ea; border-radius: 2px; background: linear-gradient(#dbe5fb,#bfd0f7); display: flex; align-items: center; justify-content: center; }
          svg { display: block; }
        </style>
        <span class="n" style="border-left-width:1px"><svg width="10" height="9"><path d="M1 0h1.500v9H1zM9 0v9L4 4.500z"/></svg></span>
        <span class="n"><svg width="7" height="9"><path d="M6 0v9L1 4.500z"/></svg></span>
        <span class="n"><svg width="7" height="9"><path d="M1 0v9l5-4.500z"/></svg></span>
        <span class="n"><svg width="10" height="9"><path d="M7.500 0H9v9H7.500zM1 0v9l5-4.500z"/></svg></span>
        <span class="tab" style="margin-left:44px">${shape(46, "#ece9d8")}<span>布局1</span></span>
        <span class="tab">${shape(46, "#ece9d8")}<span>布局2</span></span>
        <span class="tab on" style="position:absolute;left:73px">${shape(34, "#000")}<span>模型</span></span>
        <span class="sp"></span>
        <span class="hs">
          <b style="left:6px"><svg width="7" height="9" fill="none" stroke="#4d6185" stroke-width="2"><path d="M5.500 1L2 4.500 5.500 8"/></svg></b>
          <b style="right:1px;width:11px"><svg width="7" height="9" fill="none" stroke="#4d6185" stroke-width="2"><path d="M2 1l3.500 3.500L2 8"/></svg></b>
        </span>`;
    }
  }

  // ascii columns are 8px wide and CJK columns 16px, like the fixed console font
  class MonoText extends HTMLElement {
    connectedCallback() {
      const raw = this.textContent;
      this.textContent = "";
      const runs = raw.match(/[\u2E80-\uFFFF]+|[^\u2E80-\uFFFF]+/g) || [];
      this.attachShadow({ mode: "open" }).innerHTML =
        `<style>:host { display: block; height: 13px; font: 13.330px/13px "Liberation Mono", monospace; color: #333; white-space: pre; }
          .c { font-family: "Noto Sans CJK SC", sans-serif; font-weight: 300; font-size: 12px; line-height: 10px; letter-spacing: 4px; }</style>` +
        runs.map(s => /[\u2E80-\uFFFF]/.test(s) ? `<span class="c">${s}</span>` : `<span>${s}</span>`).join("");
    }
  }

  class CadCommand extends HTMLElement {
    connectedCallback() {
      this.attachShadow({ mode: "open" }).innerHTML = `
        <style>
          :host { display: block; height: 60px; flex: none; box-sizing: border-box; border-top: 1px solid #222; padding: 5px 6px 0 6px; position: relative; box-shadow: inset 0 1px 0 #fff; }
          .grip { position: absolute; left: 6px; top: 6px; width: 6px; height: 49px; border-left: 1px solid #aca899; border-right: 1px solid #aca899; }
          .box { margin-left: 10px; height: 49px; box-sizing: border-box; border: 1px solid #222; border-width: 2px 0 1px 1px; background: #fbfbf7; display: flex; flex-direction: column; position: relative; }
          .top { height: 32px; padding: 1px 1px 0; box-sizing: border-box; border-bottom: 1px solid #aaa; }
          .bot { padding: 1px 1px 0; }
          b { position: absolute; right: 3px; width: 14px; height: 14px; box-sizing: border-box; border: 1px solid #b4c4ea; border-radius: 2px; background: linear-gradient(#dbe5fb,#bfd0f7); display: flex; align-items: center; justify-content: center; }
        </style>
        <div class="grip"></div>
        <div class="box">
          <div class="top"><slot name="l1"></slot><slot name="l2"></slot></div>
          <div class="bot"><slot name="l3"></slot></div>
          <b style="top:1px"><svg width="9" height="7" fill="none" stroke="#4d6185" stroke-width="2"><path d="M1 5.500L4.500 2 8 5.500"/></svg></b>
          <b style="top:17px"><svg width="9" height="7" fill="none" stroke="#4d6185" stroke-width="2"><path d="M1 1.500L4.500 5 8 1.500"/></svg></b>
          <b style="top:33px;right:22px"><svg width="7" height="9" fill="none" stroke="#4d6185" stroke-width="2"><path d="M2 1l3.500 3.500L2 8"/></svg></b>
        </div>`;
    }
  }

  class CadStatus extends HTMLElement {
    connectedCallback() {
      const btn = (t, w, on) => `<span class="k${on ? " on" : ""}" style="width:${w}px">${t}</span>`;
      this.attachShadow({ mode: "open" }).innerHTML = `
        <style>
          :host { display: flex; height: 21px; flex: none; align-items: center; padding-left: 5px; box-sizing: border-box; gap: 5px; font-size: 12px; color: #111; }
          .c { width: 250px; height: 18px; box-sizing: border-box; border: 1px solid; border-color: #aca899 #fff #fff #aca899; font: 10px/16px "Liberation Mono", monospace; padding-left: 2px; margin-right: 0; }
          .k { height: 18px; box-sizing: border-box; text-align: center; line-height: 17px; border: 1px solid; border-color: #fff #aca899 #aca899 #fff; }
          .k.on { background: #f6f5ee; border-color: #444 #fff #fff #444; }
          .w { position: absolute; left: 985px; top: 719px; width: 22px; height: 18px; background: #f4f2e6; }
          .arr { position: absolute; left: 1013px; top: 731px; }
        </style>
        <span class="c">-884.1376, 1011.9726, 0.0000</span>
        ${btn("捕捉", 27)}${btn("栅格", 27)}${btn("正交", 27)}${btn("极轴", 27, 1)}${btn("对象捕捉", 51, 1)}${btn("对象追踪", 51, 1)}${btn("线宽", 27)}${btn("模型", 27, 1)}
        <span class="w"><svg width="22" height="18"><path d="M3 12l6-9 4 4-5 7z" fill="#dfe6ee" stroke="#567"/><path d="M12 4l8 13H6z" fill="#f5c800" stroke="#765"/><path d="M13 8v5M13 14v2" stroke="#111" stroke-width="1.600"/></svg></span>
        <svg class="arr" width="9" height="5"><path d="M0 0h9L4.500 5z" fill="#111"/></svg>`;
    }
  }

  class WinTaskbar extends HTMLElement {
    connectedCallback() {
      this.attachShadow({ mode: "open" }).innerHTML = `
        <style>
          :host { display: flex; height: 30px; flex: none; align-items: stretch; position: relative; color: #dbe6f8;
                  background: linear-gradient(#245cc8 0,#3d8cf0 3px,#2a72e4 6px,#2360d8 50%,#1e55c8 92%,#17409c 100%); font: 10px "Liberation Mono",monospace; }
          .st { width: 97px; flex: none; display: flex; align-items: center; padding-left: 11px; box-sizing: border-box; border-radius: 0 12px 14px 0;
                background: linear-gradient(#4c9a4c 0,#6cb56c 3px,#3f8f3f 8px,#3f973f 75%,#2d7a2d 100%); color: #e8f4e4;
                font: italic 300 19px "Noto Sans CJK SC", sans-serif; gap: 7px; box-shadow: inset -4px 0 4px #2a6a2a; }
          .q { display: flex; align-items: center; margin-left: 13px; gap: 5px; width: 89px; flex: none; }
          .q span { width: 17px; height: 17px; display: block; }
          .more { color: #cfe0ff; font: 11px "Liberation Sans", sans-serif; margin: -8px 0 0 5px; width: 14px; }
          .tk { width: 159px; height: 25px; margin: 3px 3px 0 0; display: flex; align-items: center; padding-left: 9px; box-sizing: border-box; border-radius: 3px; background: linear-gradient(#3f86f0,#3a7eec); gap: 3px; white-space: pre; flex: none; }
          .tk.on { background: linear-gradient(#1c4aa8,#1d52b8); }
          .tk i { font: 12px "Noto Sans CJK SC", sans-serif; }
          .sp { flex: 1; }
          .tray { width: 95px; flex: none; margin-left: 0; position: relative; background: linear-gradient(#0f8ae8 0,#24a2f0 3px,#118ae6 6px,#0f7fdc 90%,#0b5fb8 100%); display: flex; align-items: center; gap: 4px; box-sizing: border-box; padding-left: 15px; }
          .clk { margin-left: auto; margin-right: 14px; font: 12px "Liberation Sans", sans-serif; letter-spacing: .6px; color: #dbeaff; }
          .kb { margin-right: 18px; display: flex; align-items: center; }
          .cir { position: absolute; left: -9px; top: 5px; width: 20px; height: 20px; border-radius: 50%; background: radial-gradient(circle at 30% 30%, #8fc4ff, #1a62d8); display: flex; align-items: center; justify-content: center; border: 1px solid #cfe4ff; box-sizing: border-box; }
        </style>
        <div class="st">
          <svg width="19" height="19" viewBox="0 0 19 19"><path d="M2 4c3-1 4-1 6 0l-1 5c-2-1-3-1-6 0z" fill="#e2512a"/><path d="M9 4c2 1 4 1 7 0l-1 5c-3 1-5 1-7 0z" fill="#6ec43c"/><path d="M1 10c3-1 4-1 6 0l-1 5c-2-1-3-1-6 0z" fill="#3f8fe8"/><path d="M8 10c2 1 4 1 7 0l-1 5c-3 1-5 1-7 0z" fill="#f5c228"/></svg>
          <span>开始</span>
        </div>
        <div class="q">
          <span><svg width="17" height="17"><path d="M2 2h13v13H2z" fill="#f2e6a0"/><path d="M4 4h9v2H4zM4 7h4v2H4zM9 7h4v2H9z" fill="#1d3f8c"/><path d="M4 11h9v2H4z" fill="#3a9a3a"/></svg></span>
          <span><svg width="17" height="17"><circle cx="8.500" cy="9" r="6.500" fill="#2f8fe8"/><path d="M5 9h7c0-4-7-4-7 0 0 4 5 4 7 2" fill="none" stroke="#fff" stroke-width="1.800"/><path d="M1 14C3 7 10 1 16 2" fill="none" stroke="#f3c94a"/></svg></span>
          <span><svg width="17" height="17"><path d="M3 2h11l1 7-6.500 7L2 9z" fill="#d8902a" stroke="#522"/><path d="M5 6h3v2H5zM10 6h3v2h-3z" fill="#311"/><path d="M6 11h6l-3 2z" fill="#522"/></svg></span>
          <div class="more">»</div>
        </div>
        <div class="tk"><svg width="16" height="17"><path d="M3 1h8l3 3v12H3z" fill="#cfe1f8" stroke="#5a86c4"/><path d="M1 3h3v13H1z" fill="#2f6fb8"/></svg><span style="margin-left:3px">CAD<i style="font-style:normal">第十三课</i>-<i style="font-style:normal">三维</i>...</span></div>
        <div class="tk on"><svg width="16" height="17"><rect x="1" y="1" width="15" height="15" fill="#3f7fc4" stroke="#cfe0f2"/><text x="8.500" y="13" text-anchor="middle" font-family="Liberation Sans" font-weight="bold" font-size="14" fill="#fff">a</text></svg><span style="margin-left:3px">AutoCAD 2004 - [...</span></div>
        <div class="sp"></div>
        <div class="kb"><svg width="17" height="14"><rect x="1" y="3" width="15" height="10" rx="1" fill="#d8d8d8" stroke="#333"/><path d="M3 6h11M3 8h11M3 10h11" stroke="#333" stroke-dasharray="1 1"/><path d="M4 3V1h9" fill="none" stroke="#222"/></svg></div>
        <div class="tray">
          <div class="cir"><svg width="8" height="10" fill="none" stroke="#fff" stroke-width="2.200"><path d="M6 1L2 5l4 4"/></svg></div>
          <svg width="17" height="14"><rect x="1" y="1" width="15" height="12" fill="#2ce04a"/><circle cx="8.500" cy="7" r="4" fill="#d81010"/></svg>
          <svg width="15" height="16"><circle cx="8" cy="8" r="5" fill="#e6d8c4"/><path d="M3 6l10-4M2 11c3 3 9 3 12 0" stroke="#456" stroke-width="2" fill="none"/></svg>
          <span class="clk">22:51</span>
        </div>`;
    }
  }

  class RedStamp extends HTMLElement {
    connectedCallback() {
      const t = this.textContent;
      this.textContent = "";
      this.attachShadow({ mode: "open" }).innerHTML = `
        <style>
          :host { position: absolute; left: 605px; top: -3px; color: #ee1520; white-space: nowrap;
                  font: 900 36px/52px "Noto Sans CJK TC", "Noto Sans CJK SC", sans-serif; letter-spacing: 13px; transform: skewX(-10deg); }
        </style>${t}`;
    }
  }

  class OrbitPanel extends HTMLElement {
    connectedCallback() {
      const icons = ["orb1", "orb2", "orb3", "orb4", "orb5", "orb6", "orb7", "orb8", "orb9"];
      this.attachShadow({ mode: "open" }).innerHTML = `
        <style>
          :host { position: absolute; left: 459px; top: 104px; width: 366px; height: 56px; box-sizing: border-box; background: #ece9d8;
                  border: 1px solid; border-color: #fff #7a7868 #7a7868 #fff; padding: 2px; display: flex; flex-direction: column; }
          .t { height: 18px; background: #0a3cc8; color: #fff; font: bold 12px/17px "Noto Sans CJK SC", sans-serif; padding-left: 2px; position: relative; flex: none; }
          .x { position: absolute; right: 2px; top: 2px; width: 15px; height: 13px; background: #ece9d8; box-sizing: border-box; border: 1px solid #555; display: flex; align-items: center; justify-content: center; }
          .r { flex: 1; display: flex; align-items: center; padding-left: 3px; }
          .b { width: 23px; display: flex; justify-content: center; flex: none; }
          .s { width: 6px; height: 20px; flex: none; background: linear-gradient(90deg,transparent 2px,#c8c5b2 2px,#c8c5b2 3px,#fff 3px,#fff 4px,transparent 4px); }
          cad-combo { width: 140px; margin-left: 0; }
        </style>
        <div class="t">三维动态观察器<span class="x"><svg width="11" height="9" stroke="#000" stroke-width="1.600"><path d="M1.500 .500l8 8M9.500 .500l-8 8"/></svg></span></div>
        <div class="r">${icons.map(n => `<span class="b">${iconSvg(n, 19)}</span>`).join("")}<i class="s"></i><cad-combo disabled text=" "></cad-combo></div>`;
    }
  }

  class QrCard extends HTMLElement {
    connectedCallback() {
      // decorative 37 module code: finder squares, then a seeded fill with some run length
      const n = 37, size = 3.5;
      let seed = 77;
      const rnd = () => (seed = (seed * 1103515245 + 12345) & 0x7fffffff) / 0x7fffffff;
      const finder = (x, y) => x < 8 && y < 8;
      const inFinder = (x, y) => finder(x, y) || finder(n - 1 - x, y) || finder(x, n - 1 - y);
      const grid = [];
      let cells = "";
      for (let y = 0; y < n; y++) {
        grid[y] = [];
        for (let x = 0; x < n; x++) {
          const left = x ? grid[y][x - 1] : false, up = y ? grid[y - 1][x] : false;
          const c = rnd() < 0.36 + 0.15 * (left + up);
          grid[y][x] = c;
          if (c && !inFinder(x, y)) cells += `<rect x="${x * size}" y="${y * size}" width="${size + 0.1}" height="${size + 0.1}"/>`;
        }
      }
      const f = (x, y) => `<path d="M${x} ${y}h24.500v24.500h-24.500z" /><rect x="${x + 3.5}" y="${y + 3.5}" width="17.500" height="17.500" fill="#fff"/><rect x="${x + 7}" y="${y + 7}" width="10.500" height="10.500"/>`;
      this.attachShadow({ mode: "open" }).innerHTML = `
        <style>
          :host { position: absolute; left: 822px; top: 578px; width: 150px; height: 150px; background: #fff; box-sizing: border-box; padding: 10px; }
          svg { display: block; }
          .logo { position: absolute; left: 58px; top: 57px; width: 33px; height: 33px; background: #1a1a1a; border: 2px solid #fff; border-radius: 4px; color: #eee;
                  font: 13px/14px "Noto Sans CJK TC", sans-serif; display: flex; align-items: center; justify-content: center; box-sizing: content-box; }
          .logo span { writing-mode: vertical-rl; letter-spacing: -1px; }
        </style>
        <svg width="130" height="130" viewBox="0 0 129.500 129.500">${cells}${f(0, 0)}${f(105, 0)}${f(0, 105)}</svg>
        <div class="logo"><span>楊名</span><span>録</span></div>`;
    }
  }

  customElements.define("cad-app", CadApp);
  customElements.define("cad-title-bar", CadTitleBar);
  customElements.define("cad-menu-bar", CadMenuBar);
  customElements.define("tool-row", ToolRow);
  customElements.define("tool-bar", ToolBar);
  customElements.define("cad-combo", CadCombo);
  customElements.define("combo-bar", ComboBar);
  customElements.define("cad-workspace", CadWorkspace);
  customElements.define("cad-scene", CadScene);
  customElements.define("layout-tabs", LayoutTabs);
  customElements.define("mono-text", MonoText);
  customElements.define("cad-command", CadCommand);
  customElements.define("cad-status", CadStatus);
  customElements.define("win-taskbar", WinTaskbar);
  customElements.define("red-stamp", RedStamp);
  customElements.define("orbit-panel", OrbitPanel);
  customElements.define("qr-card", QrCard);
</script>
</body>
</html>
